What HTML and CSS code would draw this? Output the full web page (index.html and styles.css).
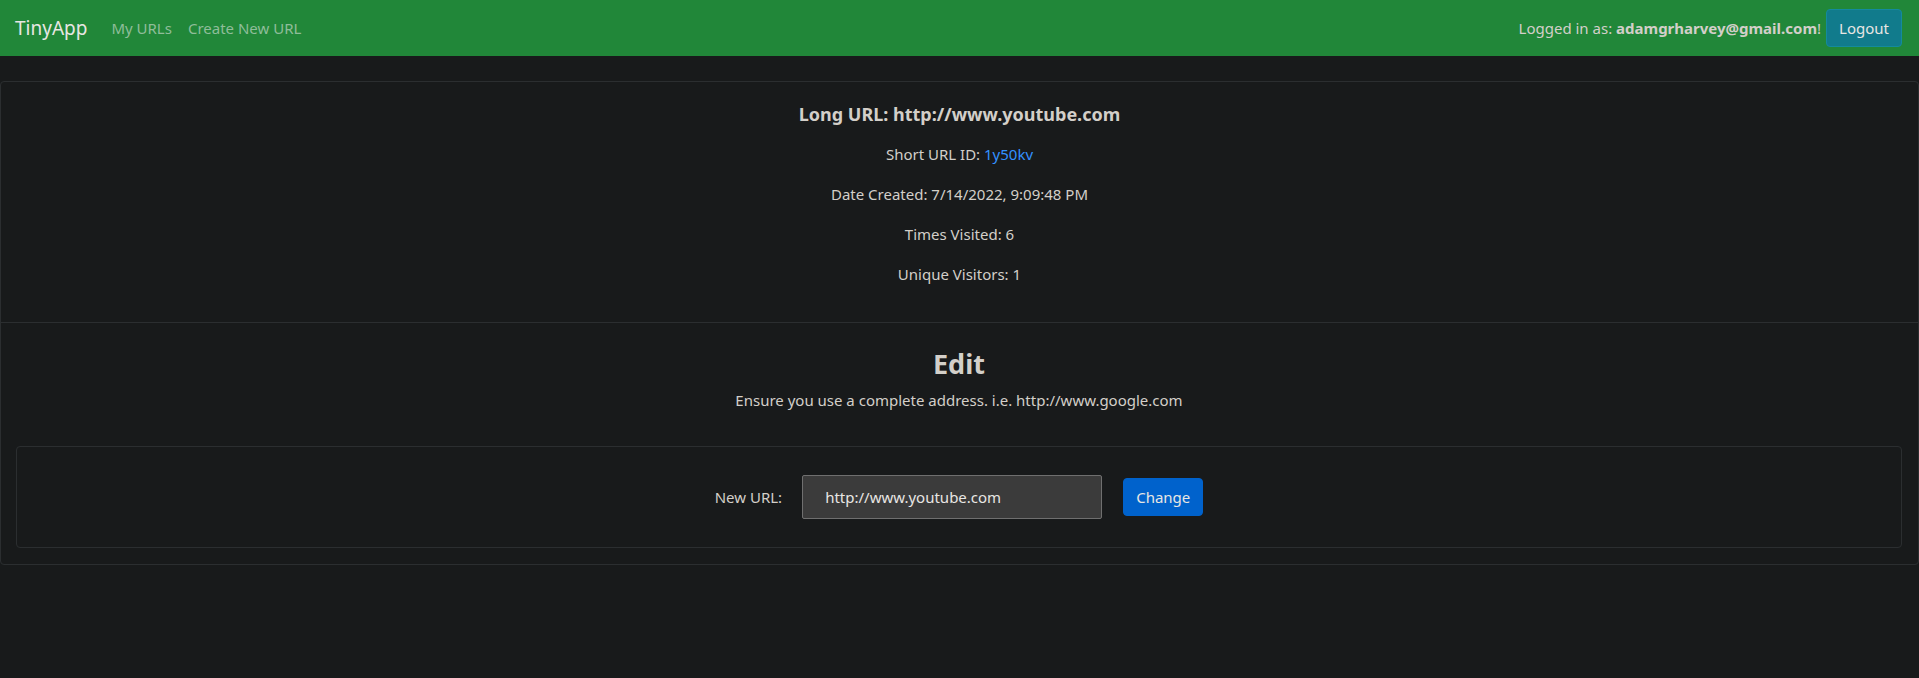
FILE: index.html
```html
<!DOCTYPE html>
<html lang="en">
<head>
<meta charset="utf-8">
<title>TinyApp - URL</title>
<link rel="stylesheet" href="styles.css">
</head>
<body>
<nav class="navbar">
  <div class="nav-left">
    <a class="brand" href="#">TinyApp</a>
    <a class="nav-link" href="#">My URLs</a>
    <a class="nav-link" href="#">Create New URL</a>
  </div>
  <div class="nav-right">
    <span class="user">Logged in as: <b>adamgrharvey@gmail.com</b>!</span>
    <button class="btn btn-info" type="button">Logout</button>
  </div>
</nav>
<main class="card">
  <section class="card-body info">
    <h5 class="title">Long URL: http://www.youtube.com</h5>
    <p>Short URL ID: <a class="link" href="#">1y50kv</a></p>
    <p>Date Created: 7/14/2022, 9:09:48 PM</p>
    <p>Times Visited: 6</p>
    <p>Unique Visitors: 1</p>
  </section>
  <section class="card-body edit">
    <h3 class="edit-title">Edit</h3>
    <p class="hint">Ensure you use a complete address. i.e. http://www.google.com</p>
    <form class="inner-card">
      <label class="label" for="url">New URL:</label>
      <input class="input" id="url" type="text" value="http://www.youtube.com">
      <button class="btn btn-primary" type="button">Change</button>
    </form>
  </section>
</main>
</body>
</html>
```
FILE: styles.css
```css
* { box-sizing: border-box; }
html, body { margin: 0; padding: 0; }
body {
  background: #181a1b;
  color: #d3cfc9;
  font-family: "Noto Sans", "Open Sans", sans-serif;
  font-size: 15px;
  line-height: 24px;
  min-height: 678px;
}
.navbar {
  height: 56px;
  background: #218739;
  display: flex;
  align-items: center;
  justify-content: space-between;
  padding: 0 17px 0 15px;
}
.nav-left { display: flex; align-items: center; }
.brand {
  color: #e8e6e3;
  font-size: 19px;
  text-decoration: none;
  margin-right: 16px;
}
.nav-link {
  color: #8fbd99;
  text-decoration: none;
  padding: 0 8px;
}
.nav-right { display: flex; align-items: center; }
.user { color: #d3cfc9; margin-right: 5px; }
.user b { font-weight: 700; }
.btn {
  font: inherit;
  border-radius: 4px;
  padding: 6px 12px;
  line-height: 24px;
  border: 1px solid transparent;
  color: #e8e6e3;
  cursor: pointer;
}
.btn-info { background: #117b8c; border-color: #148a9d; }
.btn-primary { background: #0062cc; border-color: #0062cc; }
.card {
  display: block;
  margin-top: 25px;
  border: 1px solid #2b2e30;
  border-radius: 4px;
}
.card-body { text-align: center; }
.info { padding: 20px 20px 20px; }
.title { font-size: 18px; font-weight: 700; margin: 0 0 16px; line-height: 24px; }
p { margin: 0 0 16px; }
.link { color: #3391ff; text-decoration: none; }
.edit { border-top: 1px solid #2b2e30; padding: 24px 16px 16px 15px; }
.edit-title { font-size: 27px; font-weight: 700; margin: 0 0 7px; line-height: 33.6px; }
.hint { margin-bottom: 34px; }
.inner-card {
  margin: 0;
  border: 1px solid #2b2e30;
  border-radius: 4px;
  height: 102px;
  display: flex;
  align-items: center;
  justify-content: center;
}
.label { color: #d3cfc9; margin-right: 20px; }
.input {
  width: 300px;
  height: 44px;
  background: #3b3b3b;
  border: 1px solid #6f6f6f;
  border-radius: 2px;
  color: #e8e6e3;
  font: inherit;
  padding: 0 22px;
  margin-right: 21px;
}
```
